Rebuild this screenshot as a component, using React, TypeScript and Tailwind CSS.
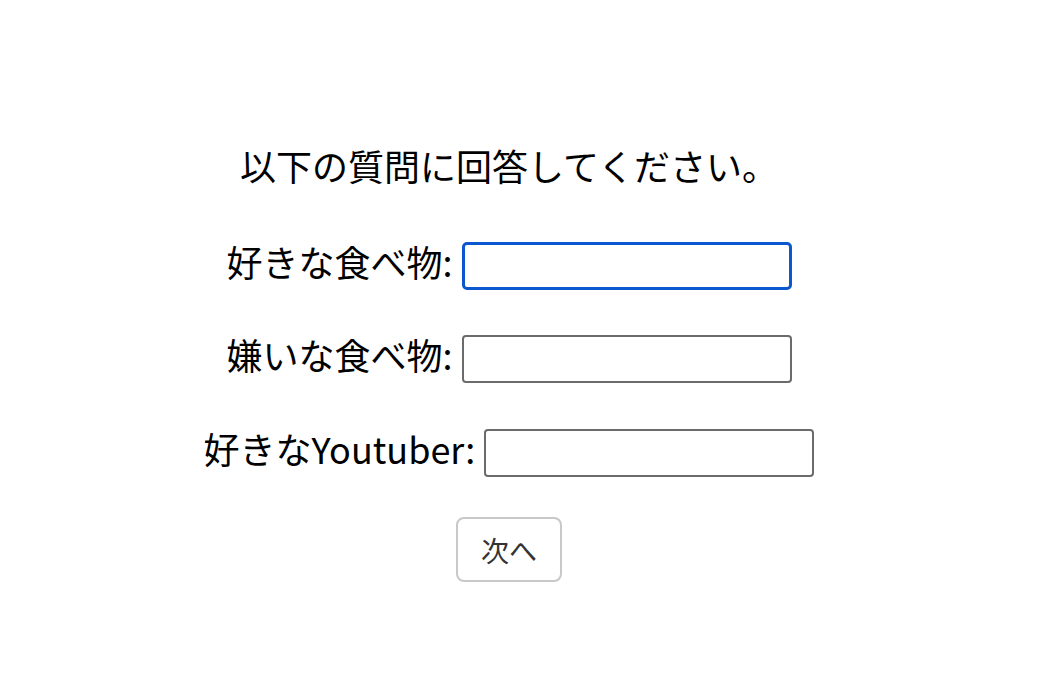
import React from "react";

const font = { fontFamily: '"Noto Sans CJK JP", "Noto Sans", sans-serif' };

export default function App() {
  return (
    <div className="w-[1060px] h-[700px] bg-white text-black" style={font}>
      <div className="w-[1018px] flex flex-col items-center pt-[142px]">
        <h1 className="text-[36px] leading-[46px] font-normal">以下の質問に回答してください。</h1>
        <div className="mt-[54px] flex items-center gap-[9px] h-[48px]">
          <label className="text-[36px] leading-[48px] mb-[10px]">好きな食べ物:</label>
          <input
            type="text"
            className="w-[330px] h-[48px] border-[3px] border-[#0b57d0] rounded-[5px] outline-none"
          />
        </div>
        <div className="mt-[45px] flex items-center gap-[9px] h-[48px]">
          <label className="text-[36px] leading-[48px] mb-[10px]">嫌いな食べ物:</label>
          <input
            type="text"
            className="w-[330px] h-[48px] border-2 border-[#6b6b6b] rounded-[4px] outline-none"
          />
        </div>
        <div className="mt-[46px] flex items-center gap-[9px] h-[48px]">
          <label className="text-[36px] leading-[48px] mb-[10px]">好きなYoutuber:</label>
          <input
            type="text"
            className="w-[330px] h-[48px] border-2 border-[#6b6b6b] rounded-[4px] outline-none"
          />
        </div>
        <button
          type="button"
          className="mt-[40px] w-[106px] h-[65px] border-2 border-[#c8c8c8] rounded-[8px] bg-white text-[28px] text-[#333] leading-none"
        >
          次へ
        </button>
      </div>
    </div>
  );
}
